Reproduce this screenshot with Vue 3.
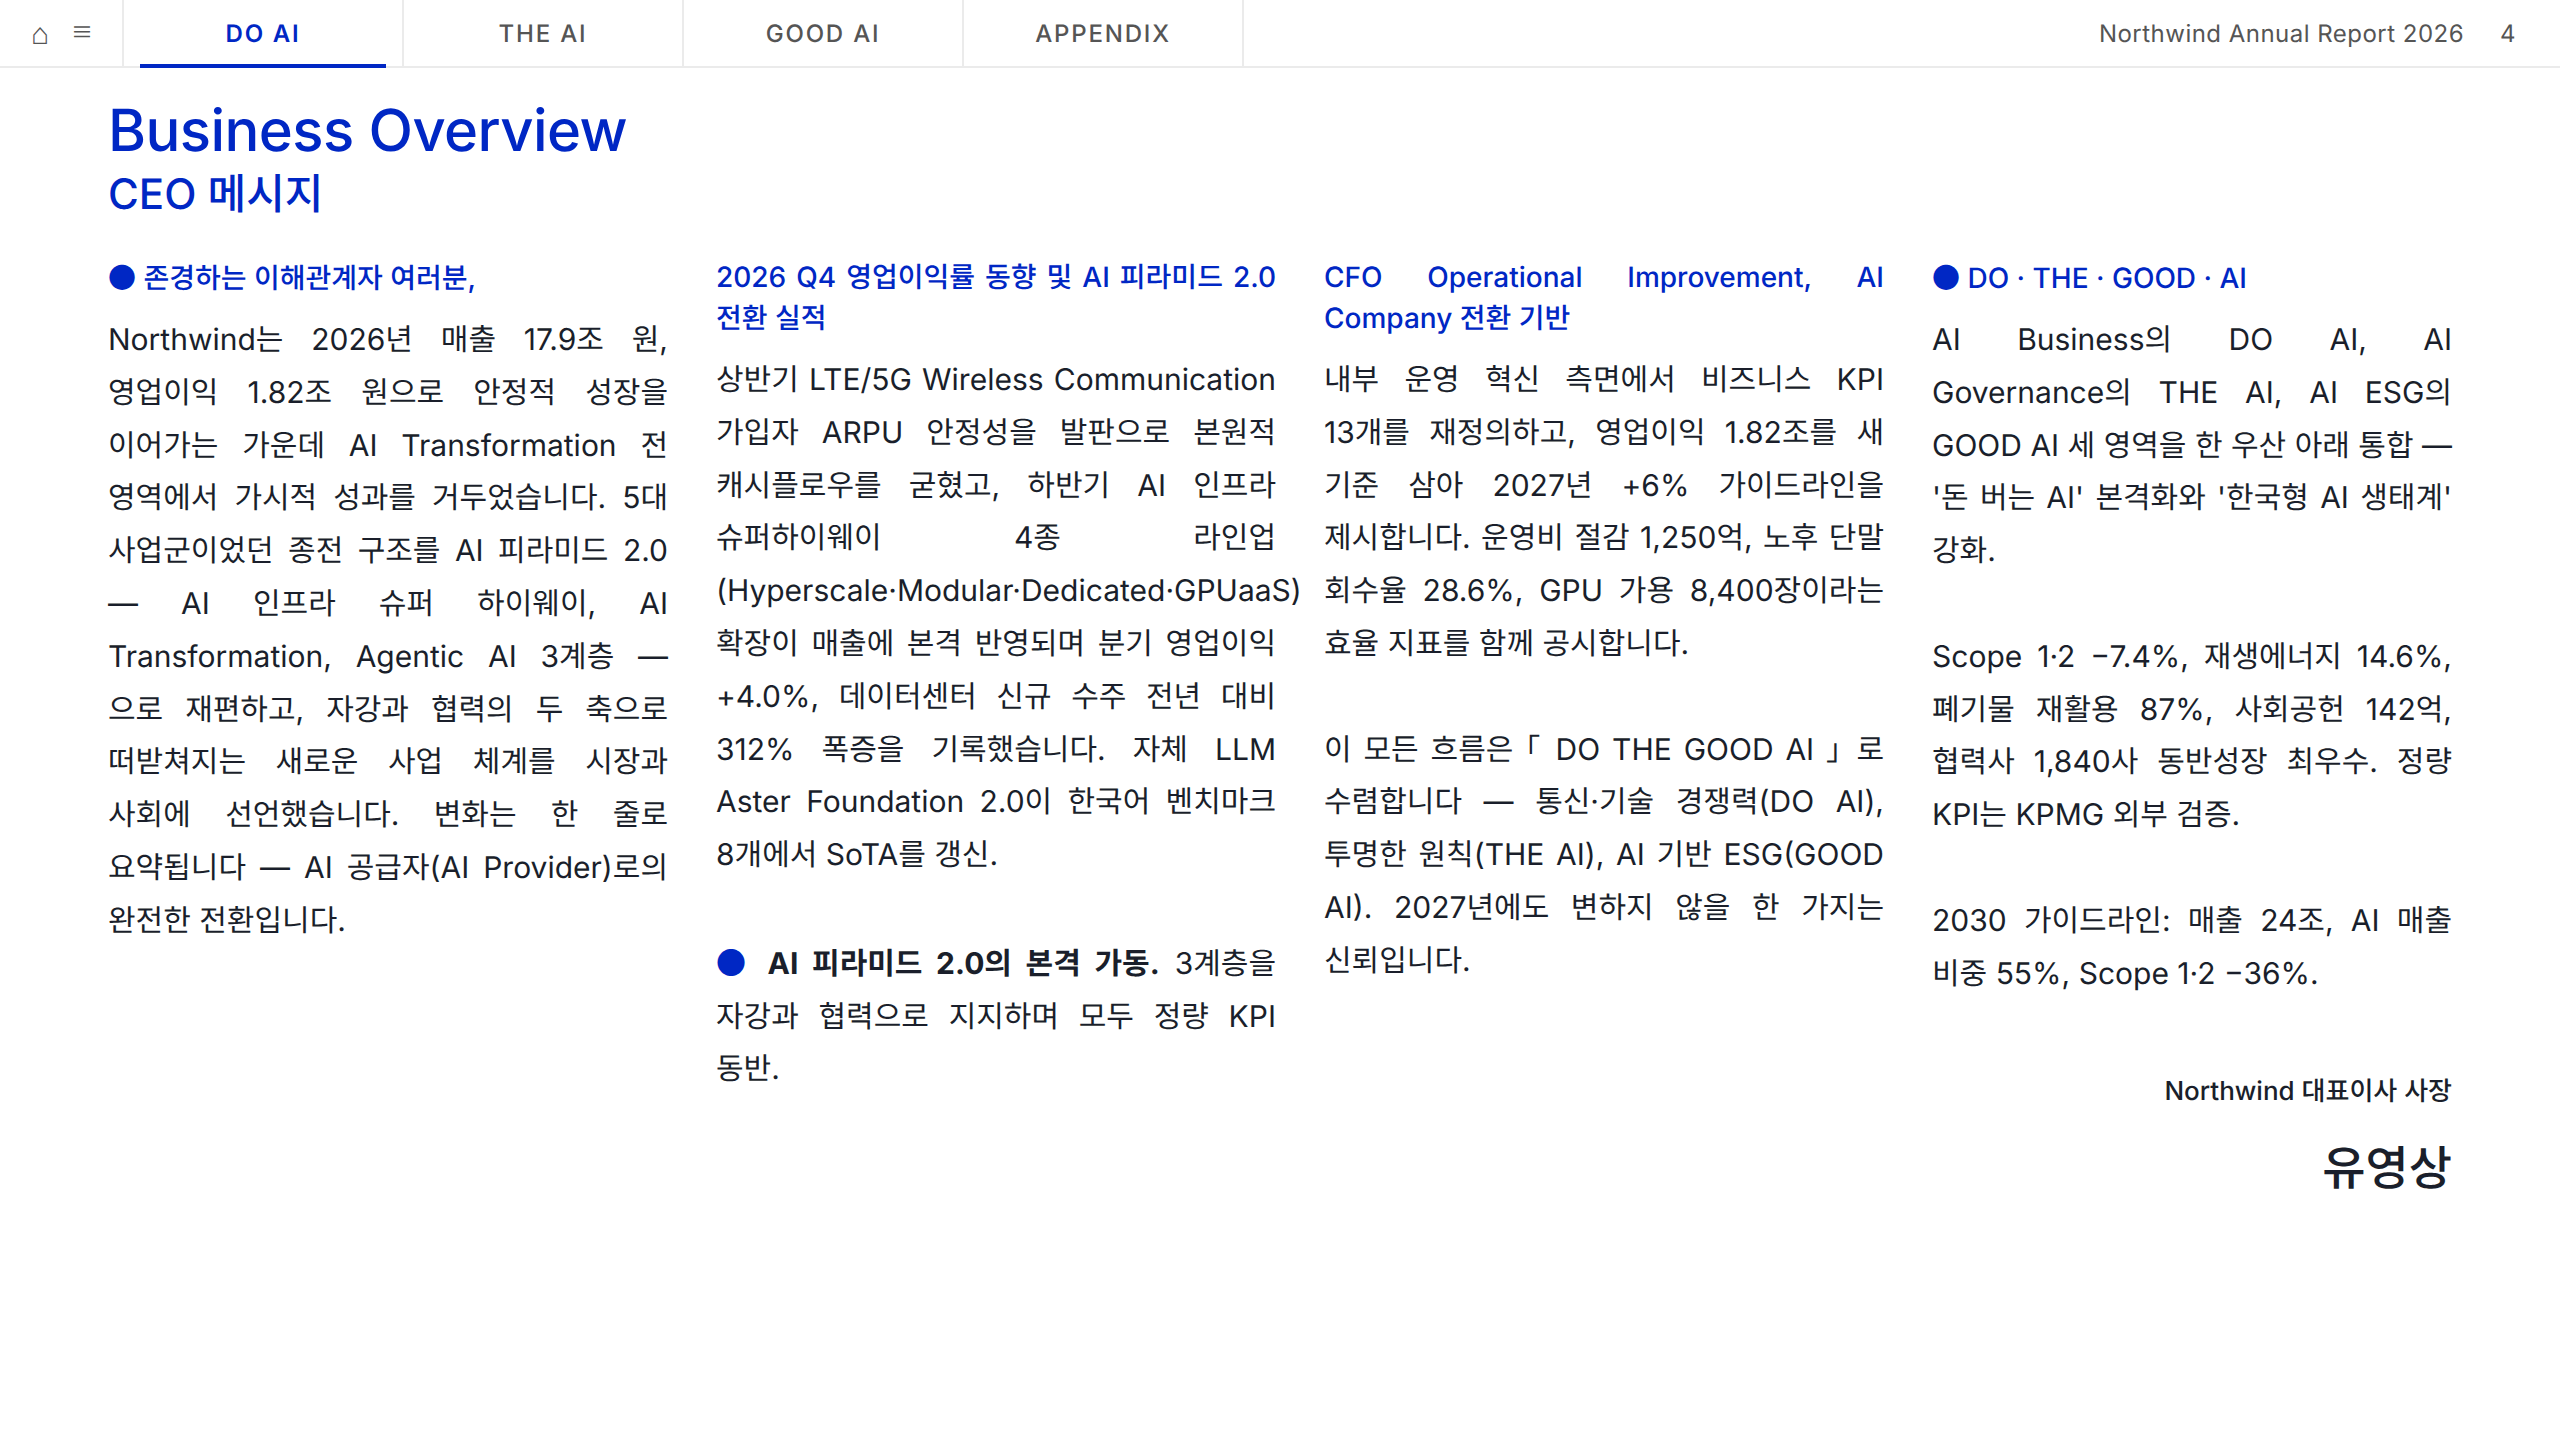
<template>
  <div class="page">
    <header class="nav">
      <div class="nav-icons">
        <span class="home">⌂</span>
        <span class="menu">≡</span>
      </div>
      <div v-for="(t, i) in tabs" :key="t" class="tab" :class="{ active: i === 0 }">{{ t }}</div>
      <div class="nav-right">
        <span class="doc">Northwind Annual Report 2026</span>
        <span class="num">4</span>
      </div>
    </header>
    <main class="main">
      <h1 class="title">Business Overview</h1>
      <h2 class="sub">CEO 메시지</h2>
      <section class="cols">
        <article class="col">
          <h3 class="head"><span class="dot">●</span> 존경하는 이해관계자 여러분,</h3>
          <p class="body">Northwind는 2026년 매출 17.9조 원, 영업이익 1.82조 원으로 안정적 성장을 이어가는 가운데 AI Transformation 전 영역에서 가시적 성과를 거두었습니다. 5대 사업군이었던 종전 구조를 AI 피라미드 2.0 — AI 인프라 슈퍼 하이웨이, AI Transformation, Agentic AI 3계층 — 으로 재편하고, 자강과 협력의 두 축으로 떠받쳐지는 새로운 사업 체계를 시장과 사회에 선언했습니다. 변화는 한 줄로 요약됩니다 — AI 공급자(AI Provider)로의 완전한 전환입니다.</p>
        </article>
        <article class="col">
          <h3 class="head">2026 Q4 영업이익률 동향 및 AI 피라미드 2.0 전환 실적</h3>
          <p class="body">상반기 LTE/5G Wireless Communication 가입자 ARPU 안정성을 발판으로 본원적 캐시플로우를 굳혔고, 하반기 AI 인프라 슈퍼하이웨이 4종 라인업 (Hyperscale·Modular·Dedicated·GPUaaS) 확장이 매출에 본격 반영되며 분기 영업이익 +4.0%, 데이터센터 신규 수주 전년 대비 312% 폭증을 기록했습니다. 자체 LLM Aster Foundation 2.0이 한국어 벤치마크 8개에서 SoTA를 갱신.</p>
          <p class="body"><span class="dot">●</span> <strong>AI 피라미드 2.0의 본격 가동.</strong> 3계층을 자강과 협력으로 지지하며 모두 정량 KPI 동반.</p>
        </article>
        <article class="col">
          <h3 class="head">CFO Operational Improvement, AI Company 전환 기반</h3>
          <p class="body">내부 운영 혁신 측면에서 비즈니스 KPI 13개를 재정의하고, 영업이익 1.82조를 새 기준 삼아 2027년 +6% 가이드라인을 제시합니다. 운영비 절감 1,250억, 노후 단말 회수율 28.6%, GPU 가용 8,400장이라는 효율 지표를 함께 공시합니다.</p>
          <p class="body">이 모든 흐름은 ｢ DO THE GOOD AI ｣ 로 수렴합니다 — 통신·기술 경쟁력(DO AI), 투명한 원칙(THE AI), AI 기반 ESG(GOOD AI). 2027년에도 변하지 않을 한 가지는 신뢰입니다.</p>
        </article>
        <article class="col last">
          <h3 class="head"><span class="dot">●</span> DO · THE · GOOD · AI</h3>
          <p class="body">AI Business의 DO AI, AI Governance의 THE AI, AI ESG의 GOOD AI 세 영역을 한 우산 아래 통합 — '돈 버는 AI' 본격화와 '한국형 AI 생태계' 강화.</p>
          <p class="body">Scope 1·2 −7.4%, 재생에너지 14.6%, 폐기물 재활용 87%, 사회공헌 142억, 협력사 1,840사 동반성장 최우수. 정량 KPI는 KPMG 외부 검증.</p>
          <p class="body">2030 가이드라인: 매출 24조, AI 매출 비중 55%, Scope 1·2 −36%.</p>
          <div class="sign">
            <div class="role">Northwind 대표이사 사장</div>
            <div class="name">유영상</div>
          </div>
        </article>
      </section>
    </main>
  </div>
</template>

<script setup>
const tabs = ['DO AI', 'THE AI', 'GOOD AI', 'APPENDIX']
</script>

<style>
html, body { margin: 0; background: #fff; }
</style>

<style scoped>
.page {
  width: 2560px;
  height: 1440px;
  background: #fff;
  overflow: hidden;
  font-family: Inter, "Noto Sans CJK KR", sans-serif;
  color: #1a1f2b;
  word-break: keep-all;
  text-rendering: geometricPrecision;
}
.nav {
  display: flex;
  align-items: stretch;
  height: 66px;
  border-bottom: 2px solid #ebebeb;
}
.nav-icons {
  width: 122px;
  border-right: 2px solid #ebebeb;
  display: flex;
  align-items: center;
  justify-content: center;
  gap: 24px;
  color: #555;
}
.home { position: relative; top: 1px; left: 2px; font-size: 30px; }
.menu { position: relative; top: -2px; font-size: 22px; }
.tab {
  position: relative;
  width: 278px;
  border-right: 2px solid #ebebeb;
  display: flex;
  align-items: center;
  justify-content: center;
  font-size: 24px;
  font-weight: 500;
  letter-spacing: 1.8px;
  color: #555;
}
.tab.active { color: #0027c4; font-weight: 600; }
.tab.active::after {
  content: "";
  position: absolute;
  left: 16px;
  right: 16px;
  bottom: -2px;
  height: 4px;
  background: #0027c4;
}
.nav-right {
  margin-left: auto;
  display: flex;
  align-items: center;
  gap: 36px;
  padding-right: 44px;
  font-size: 24px;
  letter-spacing: 0.48px;
  color: #555;
}
.main { padding: 26px 68px 0 108px; }
.title {
  margin: 0;
  font-size: 58px;
  font-weight: 500;
  letter-spacing: -0.58px;
  line-height: 73px;
  color: #0027c4;
}
.sub {
  margin: 0 0 34px;
  font-size: 42px;
  font-weight: 500;
  line-height: 56px;
  color: #0027c4;
}
.cols {
  display: grid;
  grid-template-columns: repeat(4, 560px);
  gap: 48px;
  align-items: start;
}
.col.last { width: 520px; }
.head {
  margin: 0 0 15px;
  font-size: 28px;
  font-weight: 500;
  line-height: 41px;
  color: #0027c4;
  text-align: justify;
}
.body {
  margin: 0 0 52.8px;
  font-size: 30px;
  line-height: 52.8px;
  text-align: justify;
}
.body:last-of-type { margin-bottom: 0; }
.dot { color: #0027c4; font-family: "Noto Sans CJK KR", sans-serif; font-weight: 400; }
strong { font-weight: 700; }
.sign { margin-top: 72px; text-align: right; }
.role { font-size: 26px; font-weight: 500; line-height: 40px; }
.name { margin-top: 27px; font-size: 47px; font-weight: 500; line-height: 60px; }
</style>
